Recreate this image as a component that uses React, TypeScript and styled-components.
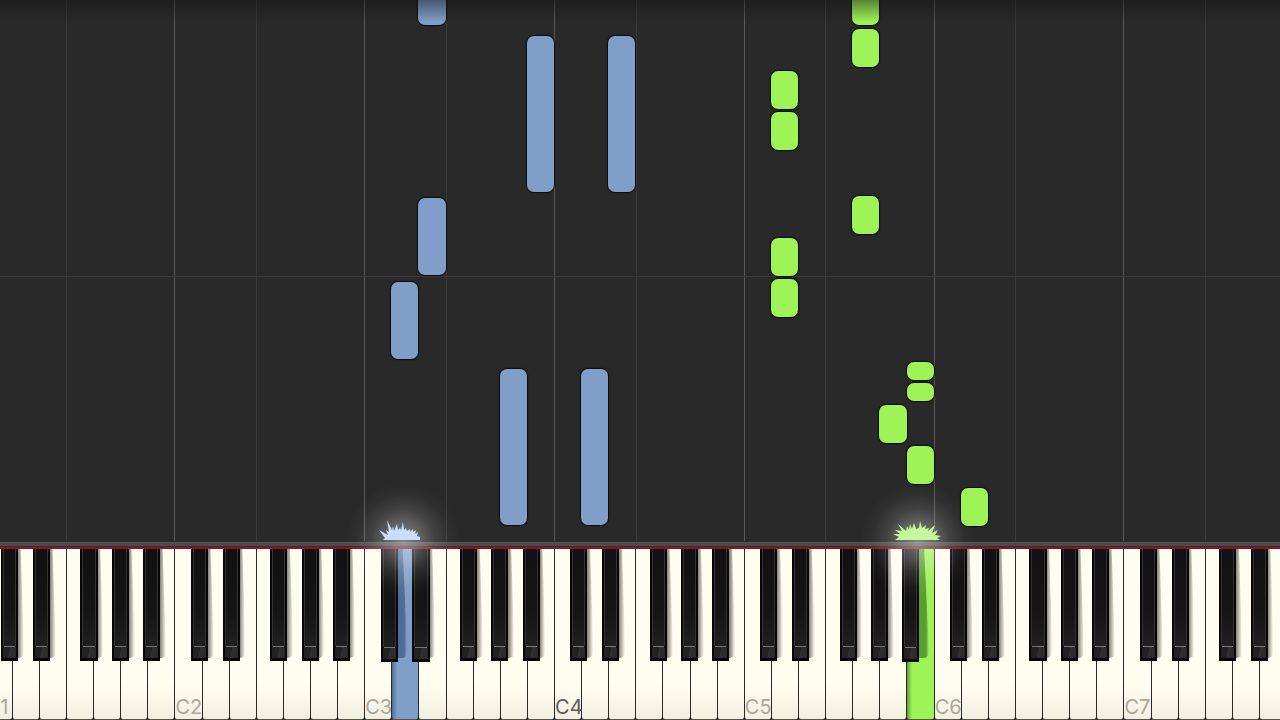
import React from 'react';
import styled, { createGlobalStyle, css } from 'styled-components';

const OCTAVES = [1, 2, 3, 4, 5, 6, 7];
const WHITE_KEYS = [0, 1, 2, 3, 4, 5, 6];
const LANES = OCTAVES.length * WHITE_KEYS.length;
const BLACK_KEYS = [
  { name: 'C sharp', left: 8.6, after: 0 },
  { name: 'D sharp', left: 25.4, after: 1 },
  { name: 'F sharp', left: 50.5, after: 3 },
  { name: 'G sharp', left: 67, after: 4 },
  { name: 'A sharp', left: 83.4, after: 5 },
];
const NAMES = ['C', 'D', 'E', 'F', 'G', 'A', 'B'];

type Hand = 'left' | 'right';
const COLORS: Record<Hand, string> = { left: '#7f9fc8', right: '#9ef357' };
const SHADES: Record<Hand, string> = { left: '#4f6c94', right: '#5c9c34' };
const PRESSED: Record<number, Hand> = { 15: 'left', 34: 'right' };

const NOTES: { lane: number; top: number; height: number; hand: Hand }[] = [
  { lane: 16, top: -52, height: 77, hand: 'left' },
  { lane: 20, top: 36, height: 156, hand: 'left' },
  { lane: 23, top: 36, height: 156, hand: 'left' },
  { lane: 16, top: 198, height: 77, hand: 'left' },
  { lane: 15, top: 282, height: 77, hand: 'left' },
  { lane: 19, top: 369, height: 156, hand: 'left' },
  { lane: 22, top: 369, height: 156, hand: 'left' },
  { lane: 32, top: -13, height: 38, hand: 'right' },
  { lane: 32, top: 29, height: 38, hand: 'right' },
  { lane: 29, top: 71, height: 38, hand: 'right' },
  { lane: 29, top: 112, height: 38, hand: 'right' },
  { lane: 32, top: 196, height: 38, hand: 'right' },
  { lane: 29, top: 238, height: 38, hand: 'right' },
  { lane: 29, top: 279, height: 38, hand: 'right' },
  { lane: 34, top: 362, height: 18, hand: 'right' },
  { lane: 34, top: 383, height: 18, hand: 'right' },
  { lane: 33, top: 405, height: 38, hand: 'right' },
  { lane: 34, top: 446, height: 38, hand: 'right' },
  { lane: 36, top: 488, height: 38, hand: 'right' },
];

const GlobalStyle = createGlobalStyle`
  * { box-sizing: border-box; }
  body { margin: 0; background: #292929; }
`;

const Page = styled.main`
  display: flex;
  flex-direction: column;
  min-height: 100vh;
  overflow: hidden;
  font-family: Inter, 'Liberation Sans', sans-serif;
`;

/* Both the note roll and the keyboard run from C1 to B7 and bleed off each side. */
const span = css`
  display: flex;
  width: 103.8%;
  margin-left: -1.2%;
`;

const Roll = styled.section`
  ${span}
  position: relative;
  flex: 1;
  min-height: 541px;
  background: #292929;
`;

const OctaveLane = styled.div`
  display: flex;
  flex: 1;
  border-left: 1px solid #5a5a5a;
`;

const LowerHalf = styled.div`
  flex: 3;
`;

const UpperHalf = styled.div`
  flex: 4;
  border-left: 1px solid #3a3a3a;
`;

const BeatLine = styled.div`
  position: absolute;
  left: 0;
  right: 0;
  bottom: 264px;
  height: 1px;
  background: #3b3b3b;
`;

const Note = styled.div<{ $lane: number; $top: number; $height: number; $hand: Hand }>`
  position: absolute;
  left: ${(p) => (p.$lane / LANES) * 100}%;
  bottom: ${(p) => 541 - p.$top - p.$height}px;
  width: ${100 / LANES}%;
  height: ${(p) => p.$height}px;
  border-radius: 7px;
  background: ${(p) => COLORS[p.$hand]};
  box-shadow: 0 0 1px 1px #0c0c10;
`;

const TopFade = styled.div`
  position: absolute;
  inset: 0 0 auto;
  height: 22px;
  background: linear-gradient(rgba(20, 20, 20, 0.5), rgba(20, 20, 20, 0));
`;

const Rail = styled.div`
  height: 8px;
  background: linear-gradient(#2b2b2b 0 1px, #545454 1px 2px, #4b4b4b 2px 5px, #3a2a2c 5px 6px, #8c1425 6px 8px);
`;

const Keyboard = styled.section`
  ${span}
  position: relative;
  height: 171px;
`;

const Octave = styled.div`
  position: relative;
  display: flex;
  flex: 1;
`;

const WhiteKey = styled.button<{ $hand?: Hand }>`
  display: flex;
  flex: 1 1 0;
  align-items: flex-end;
  min-width: 0;
  margin: 0;
  padding: 0;
  border: 0;
  border-left: 1px solid #2a2926;
  border-bottom: 1px solid #55534c;
  border-radius: 0 0 3px 3px;
  background: ${(p) =>
    p.$hand
      ? `linear-gradient(90deg, ${SHADES[p.$hand]}, ${COLORS[p.$hand]} 5px)`
      : 'linear-gradient(#fffdf0 0 80%, #f1efe0)'};
`;

const KeyLabel = styled.span<{ $middle: boolean }>`
  position: relative;
  z-index: 1;
  font: 400 20px/24px Inter, 'Liberation Sans', sans-serif;
  white-space: nowrap;
  color: ${(p) => (p.$middle ? '#5c5a52' : '#aaa89b')};
`;

const BlackKey = styled.button<{ $left: number; $down: boolean }>`
  position: absolute;
  top: 0;
  left: ${(p) => p.$left}%;
  width: 9%;
  height: ${(p) => (p.$down ? 113 : 112)}px;
  margin: 0;
  padding: 0 2px 3px;
  border: 0;
  background: #070707;
  display: flex;
  flex-direction: column;
`;

const KeyShadow = styled.span<{ $left: number; $hand?: Hand }>`
  position: absolute;
  top: 0;
  left: ${(p) => p.$left + 8}%;
  width: ${(p) => (p.$hand ? 6 : 4)}%;
  height: 109px;
  border-radius: 0 0 5px 0;
  clip-path: polygon(0 0, 60% 0, 100% 85%, 100% 97%, 80% 100%, 0 100%);
  background: ${(p) =>
    p.$hand
      ? `linear-gradient(90deg, ${SHADES[p.$hand]} 75%, transparent)`
      : 'linear-gradient(90deg, #8d8b82 30%, rgba(200, 198, 186, 0))'};
`;

const KeyTop = styled.span`
  flex: 1;
  border: solid #333;
  border-width: 0 1px;
  background: linear-gradient(#111 0, #151515 65%, #202020);
`;

const KeyFront = styled.span`
  height: 12px;
  padding: 0 1px;
  border-radius: 2px 2px 0 0;
  background: linear-gradient(100deg, #222 0 48%, #303030 50%, #292929);

  &::before {
    content: '';
    display: block;
    height: 1px;
    background: #777;
  }
`;

const Burst = styled.div<{ $lane: number }>`
  position: absolute;
  z-index: 2;
  left: ${(p) => ((p.$lane + 0.5) / LANES) * 100}%;
  bottom: 0;
  width: 0;
  height: 0;
`;

const BurstArt = styled.svg`
  position: absolute;
  left: -70px;
  top: -70px;
  width: 140px;
  height: 140px;
  pointer-events: none;
`;

function Spark({ lane, hand }: { lane: number; hand: Hand }) {
  return (
    <Burst $lane={lane}>
      <BurstArt viewBox="-70 -70 140 140" aria-hidden="true">
        <defs>
          <radialGradient id={`glow-${hand}`}>
            <stop offset="0" stopColor="#fff" stopOpacity="0.42" />
            <stop offset="0.3" stopColor="#fff" stopOpacity="0.27" />
            <stop offset="0.55" stopColor="#fff" stopOpacity="0.12" />
            <stop offset="0.8" stopColor="#fff" stopOpacity="0.03" />
            <stop offset="1" stopColor="#fff" stopOpacity="0" />
          </radialGradient>
        </defs>
        <circle cx={-2} cy="0" r="58" fill={`url(#glow-${hand})`} />
        {hand === 'left' ? (
          <path
            fill="#c9defb"
            d="M-22-1-20-3-26-11-17-6-19-11-16-9-18-21-13-11-12-15-11-10-8-17-7-11-5-13-4-11-2-19-1-11 1-13 2-10 5-12 5-9 8-12 8-9 11-11 10-7 13-9 12-5 15-4 15-1Z"
          />
        ) : (
          <path
            fill="#c3f99a"
            d="M-25-1-21-4-27-7-20-7-25-11-18-10-22-17-14-10-13-15-11-11-10-17-8-12-6-18-4-12-1-13 0-20 2-13 6-16 5-12 9-13 8-10 15-16 12-8 18-11 15-6 21-5 17-3 20-1Z"
          />
        )}
      </BurstArt>
    </Burst>
  );
}

export default function App() {
  return (
    <Page>
      <GlobalStyle />
      <Roll aria-label="Falling notes">
        {OCTAVES.map((octave) => (
          <OctaveLane key={octave}>
            <LowerHalf />
            <UpperHalf />
          </OctaveLane>
        ))}
        <BeatLine />
        {NOTES.map((n, i) => (
          <Note key={i} $lane={n.lane} $top={n.top} $height={n.height} $hand={n.hand} />
        ))}
        <TopFade />
        <Spark lane={15} hand="left" />
        <Spark lane={34} hand="right" />
      </Roll>
      <Rail />
      <Keyboard aria-label="Piano keyboard">
        {OCTAVES.map((octave, o) => (
          <Octave key={octave}>
            {WHITE_KEYS.map((k) => (
              <WhiteKey
                key={k}
                type="button"
                aria-label={`${NAMES[k]}${octave}`}
                $hand={PRESSED[o * 7 + k]}
              >
                {k === 0 && <KeyLabel $middle={octave === 4}>{`C${octave}`}</KeyLabel>}
              </WhiteKey>
            ))}
            {BLACK_KEYS.map((b) => (
              <React.Fragment key={b.name}>
                <KeyShadow $left={b.left} $hand={PRESSED[o * 7 + b.after + 1]} />
                <BlackKey
                  type="button"
                  aria-label={`${b.name} ${octave}`}
                  $left={b.left}
                  $down={Boolean(PRESSED[o * 7 + b.after] || PRESSED[o * 7 + b.after + 1])}
                >
                  <KeyTop />
                  <KeyFront />
                </BlackKey>
              </React.Fragment>
            ))}
          </Octave>
        ))}
      </Keyboard>
    </Page>
  );
}
